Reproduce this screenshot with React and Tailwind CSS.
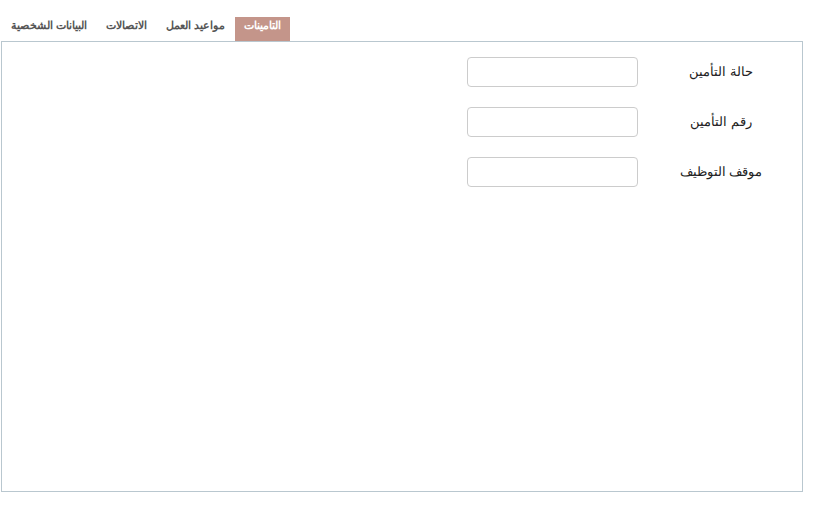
import React from 'react';

const tabs = [
  { label: 'البيانات الشخصية' },
  { label: 'الاتصالات' },
  { label: 'مواعيد العمل' },
  { label: 'التامينات', active: true },
];

const fields = ['حالة التأمين', 'رقم التأمين', 'موقف التوظيف'];

export default function App() {
  return (
    <div className="w-[820px] h-[512px] bg-white pt-[17px] font-['Liberation_Sans',Arial,sans-serif]">
      <div className="flex pl-[2px] gap-[1px]">
        {tabs.map((t) => (
          <div
            key={t.label}
            className={`h-[24px] px-[9px] pt-[1px] text-[11px] font-bold leading-[14px] ${t.active ? 'bg-[#c4958a] text-white' : 'text-[#555]'}`}
          >
            {t.label}
          </div>
        ))}
      </div>
      <div className="ml-px w-[802px] h-[451px] border border-[#b9c7cf] pt-[15px]" dir="rtl">
        <div className="flex flex-col gap-[20px]">
          {fields.map((f) => (
            <div key={f} className="flex items-center h-[30px]">
              <div className="w-[162px] text-center text-[13px] text-[#222]">{f}</div>
              <input className="w-[171px] h-[30px] mr-[2px] rounded-[4px] border border-[#ccc] outline-none" />
            </div>
          ))}
        </div>
      </div>
    </div>
  );
}
